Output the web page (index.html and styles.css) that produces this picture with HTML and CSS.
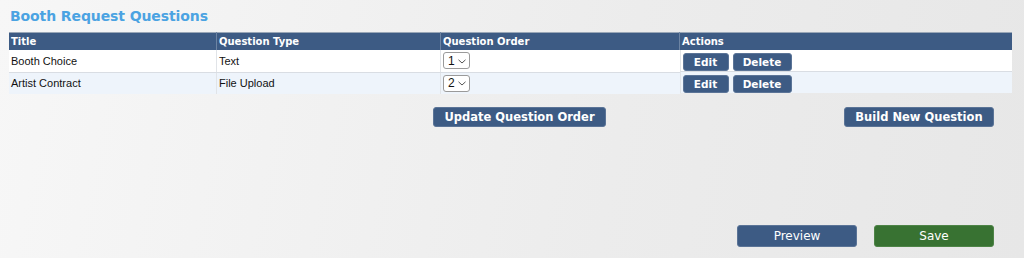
FILE: index.html
```html
<!DOCTYPE html>
<html>
<head>
<meta charset="utf-8">
<link rel="stylesheet" href="styles.css">
</head>
<body>
<div class="page">
  <h1 class="title">Booth Request Questions</h1>
  <table class="qtable">
    <thead>
      <tr>
        <th class="c1">Title</th>
        <th class="c2">Question Type</th>
        <th class="c3">Question Order</th>
        <th class="c4">Actions</th>
      </tr>
    </thead>
    <tbody>
      <tr class="odd">
        <td>Booth Choice</td>
        <td>Text</td>
        <td><span class="sel">1<svg class="chev" viewBox="0 0 8 5" width="8" height="5"><path d="M0.5 0.8 L4 4 L7.5 0.8" fill="none" stroke="#555" stroke-width="1"/></svg></span></td>
        <td class="acts"><span class="btn sm edit">Edit</span><span class="btn sm del">Delete</span></td>
      </tr>
      <tr class="even">
        <td>Artist Contract</td>
        <td>File Upload</td>
        <td><span class="sel">2<svg class="chev" viewBox="0 0 8 5" width="8" height="5"><path d="M0.5 0.8 L4 4 L7.5 0.8" fill="none" stroke="#555" stroke-width="1"/></svg></span></td>
        <td class="acts"><span class="btn sm edit">Edit</span><span class="btn sm del">Delete</span></td>
      </tr>
    </tbody>
  </table>
  <div class="row-actions">
    <span class="btn md update">Update Question Order</span>
    <span class="btn md build">Build New Question</span>
  </div>
  <div class="footer">
    <span class="btn lg preview">Preview</span>
    <span class="btn lg save">Save</span>
  </div>
</div>
</body>
</html>
```

FILE: styles.css
```css
html, body {
  margin: 0;
  padding: 0;
}
body {
  width: 1024px;
  height: 258px;
  overflow: hidden;
  background: linear-gradient(100deg, #f7f7f7 0%, #ececec 60%, #e7e7e7 100%);
  font-family: "Liberation Sans", Arial, sans-serif;
}
.page {
  padding: 0 12px 0 9px;
}
.title {
  margin: 0;
  padding: 8px 0 0 1px;
  height: 24px;
  font-family: "DejaVu Sans", Verdana, sans-serif;
  font-weight: bold;
  font-size: 14px;
  color: #4ba3e2;
  letter-spacing: -0.1px;
}
.qtable {
  width: 1003px;
  border-collapse: collapse;
  font-size: 11px;
  color: #111;
}
.qtable thead tr {
  background: #3d5b84;
  border-top: 1px solid #9aa7b7;
}
.qtable th {
  text-align: left;
  color: #fff;
  font-family: "DejaVu Sans", Verdana, sans-serif;
  font-weight: bold;
  font-size: 10px;
  height: 17px;
  padding: 0 2px;
  border-left: 1px solid #6d84a3;
}
.qtable th:first-child, .qtable td:first-child {
  border-left: none;
}
.c1 { width: 203px; }
.c2 { width: 219px; }
.c3 { width: 234px; }
.qtable td {
  height: 21px;
  padding: 0 2px;
  border-left: 1px solid #e1e4e8;
}
.qtable tr.odd td { background: #ffffff; border-bottom: 1px solid #d9dde3; }
.qtable tr.even td { background: #eef4fb; }
.sel {
  display: inline-flex;
  align-items: center;
  gap: 3px;
  height: 15px;
  padding: 0 3px 0 4px;
  border: 1px solid #9a9a9a;
  border-radius: 3px;
  background: #fff;
  font-size: 12px;
  color: #111;
  vertical-align: middle;
}
.chev { display: block; margin-top: 1px; }
.acts {
  display: flex;
  gap: 4px;
  align-items: center;
  padding-top: 2px !important;
  height: 19px !important;
}
.btn {
  display: inline-flex;
  align-items: center;
  justify-content: center;
  background: #3d5b84;
  color: #fff;
  font-family: "DejaVu Sans", Verdana, sans-serif;
  font-weight: bold;
  border-radius: 3px;
  border: 1px solid #5b7497;
  box-sizing: border-box;
}
.btn.sm {
  height: 18px;
  font-size: 10.5px;
}
.edit { width: 46px; }
.del { width: 59px; }
.row-actions {
  display: flex;
  justify-content: flex-end;
  padding: 13px 18px 0 0;
}
.btn.md {
  height: 20px;
  font-size: 11.5px;
}
.update { width: 173px; margin-right: 238px; }
.build { width: 150px; }
.footer {
  display: flex;
  justify-content: flex-end;
  padding: 98px 18px 0 0;
  gap: 17px;
}
.btn.lg {
  width: 120px;
  height: 22px;
  font-size: 12px;
  font-weight: normal;
}
.save {
  background: #387232;
  border-color: #4e8447;
}
```
